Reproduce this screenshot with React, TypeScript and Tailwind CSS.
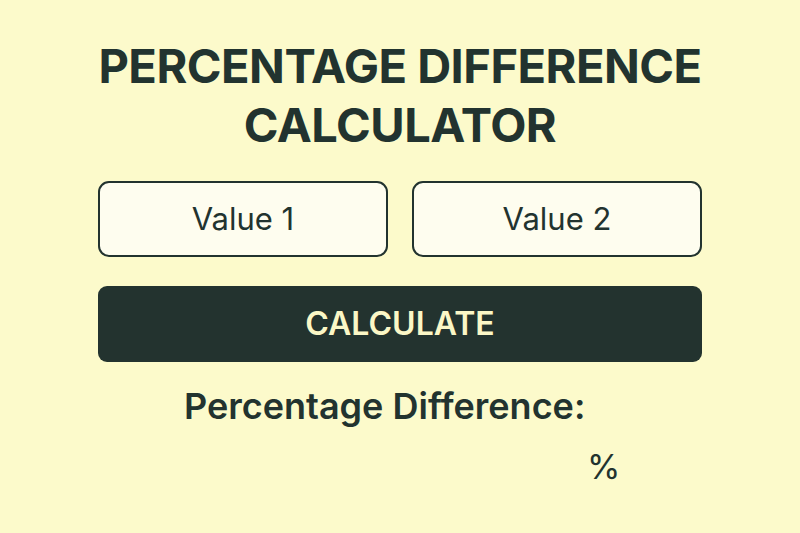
import React from 'react';

// Simple percentage difference calculator card
export default function App() {
  return (
    <div className="w-[800px] h-[533px] bg-[#fcfacb] text-[#22332f] font-['Inter',sans-serif] flex flex-col items-center">
      <h1 className="mt-[36px] text-[47px] leading-[59px] font-bold text-center tracking-[-0.5px]">
        PERCENTAGE DIFFERENCE
        <br />
        CALCULATOR
      </h1>

      <div className="mt-[27px] w-[604px] grid grid-cols-2 gap-[24px]">
        <div className="h-[76px] rounded-[11px] border-2 border-[#22332f] bg-[#fefdef] flex items-center justify-center text-[31px]">
          Value 1
        </div>
        <div className="h-[76px] rounded-[11px] border-2 border-[#22332f] bg-[#fefdef] flex items-center justify-center text-[31px]">
          Value 2
        </div>
      </div>

      <button className="mt-[29px] w-[604px] h-[76px] rounded-[9px] bg-[#23332f] text-[#fbf7c6] text-[32px] font-semibold">
        CALCULATE
      </button>

      <div className="mt-[19px] w-[604px] pl-[86px] text-[36px] font-semibold leading-[50px]">
        Percentage Difference:
      </div>
      <div className="mt-[14px] w-[604px] pl-[489px] text-[34px] leading-[44px]">%</div>
    </div>
  );
}
